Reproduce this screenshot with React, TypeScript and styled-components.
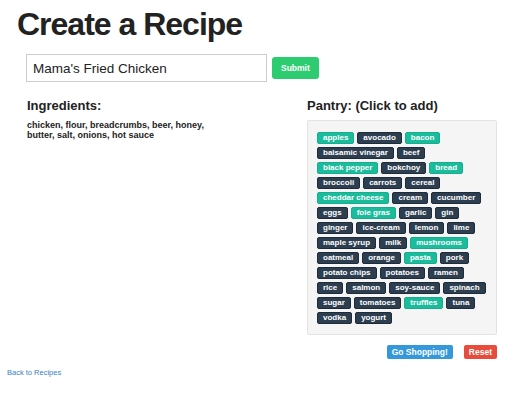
import React, { useState } from "react";
import styled, { createGlobalStyle } from "styled-components";

const GlobalStyle = createGlobalStyle`
  body {
    margin: 0;
    background: #fff;
    font-family: "Liberation Sans", Helvetica, Arial, sans-serif;
    color: #222;
  }
`;

const pantry = [
  "apples", "avocado", "bacon", "balsamic vinegar", "beef", "black pepper",
  "bokchoy", "bread", "broccoli", "carrots", "cereal", "cheddar cheese",
  "cream", "cucumber", "eggs", "foie gras", "garlic", "gin", "ginger",
  "ice-cream", "lemon", "lime", "maple syrup", "milk", "mushrooms",
  "oatmeal", "orange", "pasta", "pork", "potato chips", "potatoes",
  "ramen", "rice", "salmon", "soy-sauce", "spinach", "sugar", "tomatoes",
  "truffles", "tuna", "vodka", "yogurt",
];

const initialPicked = [
  "apples", "bacon", "black pepper", "bread", "cheddar cheese",
  "foie gras", "mushrooms", "pasta", "truffles",
];

export default function App() {
  const [name, setName] = useState("Mama's Fried Chicken");
  const [picked, setPicked] = useState<string[]>(initialPicked);

  const toggle = (item: string) =>
    setPicked((p) => (p.includes(item) ? p.filter((x) => x !== item) : [...p, item]));

  return (
    <Page>
      <GlobalStyle />
      <Title>Create a Recipe</Title>
      <FormRow>
        <NameInput value={name} onChange={(e) => setName(e.target.value)} />
        <Button color="#2ecc71" big>Submit</Button>
      </FormRow>
      <Columns>
        <IngredientsCol>
          <Heading>Ingredients:</Heading>
          <IngredientText>
            chicken, flour, breadcrumbs, beer, honey, butter, salt, onions, hot sauce
          </IngredientText>
        </IngredientsCol>
        <PantryCol>
          <Heading>Pantry: (Click to add)</Heading>
          <PantryBox>
            {pantry.map((item) => (
              <Tag key={item} active={picked.includes(item)} onClick={() => toggle(item)}>
                {item}
              </Tag>
            ))}
          </PantryBox>
          <Actions>
            <Button color="#3498db">Go Shopping!</Button>
            <Button color="#e74c3c">Reset</Button>
          </Actions>
        </PantryCol>
      </Columns>
      <BackLink href="#">Back to Recipes</BackLink>
    </Page>
  );
}

const Page = styled.div`
  padding: 6px 23px 0 7px;
`;

const Title = styled.h1`
  margin: 0 0 0 10px;
  font-size: 32px;
  line-height: 37px;
  font-weight: 700;
  letter-spacing: -1px;
  color: #222;
`;

const FormRow = styled.div`
  display: flex;
  align-items: center;
  gap: 5px;
  margin: 11px 0 0 19px;
`;

const NameInput = styled.input`
  box-sizing: border-box;
  width: 241px;
  height: 28px;
  padding: 0 6px;
  border: 1px solid #ccc;
  font-family: "Liberation Sans", Helvetica, Arial, sans-serif;
  font-size: 13.5px;
  color: #222;
  outline: none;
`;

const Button = styled.button<{ color: string; big?: boolean }>`
  box-sizing: border-box;
  height: ${(p) => (p.big ? "22px" : "14px")};
  padding: ${(p) => (p.big ? "0 9px" : "0 5px")};
  border: none;
  border-radius: ${(p) => (p.big ? "3px" : "2px")};
  background: ${(p) => p.color};
  color: #fff;
  font-family: "Liberation Sans", Helvetica, Arial, sans-serif;
  font-size: 8.5px;
  font-weight: 700;
  cursor: pointer;
`;

const Columns = styled.div`
  display: flex;
  margin-top: 16px;
`;

const IngredientsCol = styled.div`
  flex: 1;
  padding-left: 20px;
`;

const PantryCol = styled.div`
  width: 190px;
`;

const Heading = styled.h3`
  margin: 0;
  font-size: 13px;
  line-height: 15px;
  font-weight: 700;
  color: #222;
`;

const IngredientText = styled.p`
  width: 195px;
  margin: 7px 0 0;
  font-size: 9px;
  line-height: 10px;
  font-weight: 700;
  color: #222;
`;

const PantryBox = styled.div`
  display: flex;
  flex-wrap: wrap;
  align-content: flex-start;
  gap: 3px;
  margin-top: 7px;
  padding: 11px 9px 10px;
  background: #f5f5f5;
  border: 1px solid #e3e3e3;
  border-radius: 2px;
`;

const Tag = styled.span<{ active: boolean }>`
  box-sizing: border-box;
  height: 12px;
  padding: 0 5px;
  border: 1px solid ${(p) => (p.active ? "#19ad8f" : "#1e2b38")};
  border-radius: 2px;
  background: ${(p) => (p.active ? "#1abc9c" : "#2c3e50")};
  color: #fff;
  font-size: 8px;
  line-height: 10px;
  font-weight: 700;
  white-space: nowrap;
  cursor: pointer;
`;

const Actions = styled.div`
  display: flex;
  justify-content: flex-end;
  gap: 11px;
  margin-top: 10px;
`;

const BackLink = styled.a`
  display: inline-block;
  margin-top: 9px;
  font-size: 7.5px;
  color: #3b7fc4;
  text-decoration: none;
`;
